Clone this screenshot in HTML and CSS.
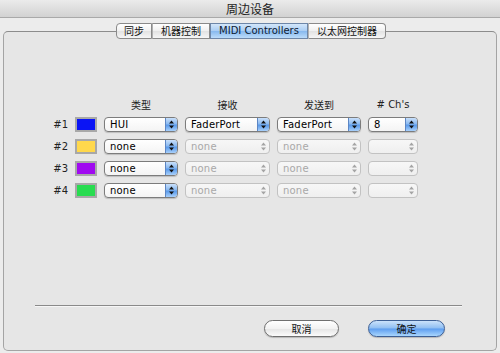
FILE: index.html
```html
<!DOCTYPE html>
<html lang="zh">

<head>
    <meta charset="UTF-8">
    <title>周边设备</title>
    <link rel="stylesheet" href="styles.css">
</head>

<body>
    <div class="window">
        <div class="titlebar">周边设备</div>
        <div class="tabview">
            <div class="tabs">
                <span class="tab">同步</span>
                <span class="tab">机器控制</span>
                <span class="tab active">MIDI Controllers</span>
                <span class="tab">以太网控制器</span>
            </div>
            <div class="panel">
                <div class="grid">
                    <span></span>
                    <span></span>
                    <span class="col-head">类型</span>
                    <span class="col-head">接收</span>
                    <span class="col-head">发送到</span>
                    <span class="col-head">#&nbsp;Ch's</span>

                    <span class="row-label">#1</span>
                    <span class="swatch"><i style="background: #0a14f5"></i></span>
                    <div class="popup"><span>HUI</span><b class="arrows"></b></div>
                    <div class="popup"><span>FaderPort</span><b class="arrows"></b></div>
                    <div class="popup"><span>FaderPort</span><b class="arrows"></b></div>
                    <div class="popup"><span>8</span><b class="arrows"></b></div>

                    <span class="row-label">#2</span>
                    <span class="swatch"><i style="background: #ffd84c"></i></span>
                    <div class="popup"><span>none</span><b class="arrows"></b></div>
                    <div class="popup disabled"><span>none</span><b class="arrows"></b></div>
                    <div class="popup disabled"><span>none</span><b class="arrows"></b></div>
                    <div class="popup disabled"><span></span><b class="arrows"></b></div>

                    <span class="row-label">#3</span>
                    <span class="swatch"><i style="background: #a00af0"></i></span>
                    <div class="popup"><span>none</span><b class="arrows"></b></div>
                    <div class="popup disabled"><span>none</span><b class="arrows"></b></div>
                    <div class="popup disabled"><span>none</span><b class="arrows"></b></div>
                    <div class="popup disabled"><span></span><b class="arrows"></b></div>

                    <span class="row-label">#4</span>
                    <span class="swatch"><i style="background: #28dc50"></i></span>
                    <div class="popup"><span>none</span><b class="arrows"></b></div>
                    <div class="popup disabled"><span>none</span><b class="arrows"></b></div>
                    <div class="popup disabled"><span>none</span><b class="arrows"></b></div>
                    <div class="popup disabled"><span></span><b class="arrows"></b></div>
                </div>

                <div class="footer">
                    <div class="separator"></div>
                    <div class="buttons">
                        <button class="btn">取消</button>
                        <button class="btn default">确定</button>
                    </div>
                </div>
            </div>
        </div>
    </div>
</body>

</html>
```

FILE: styles.css
```css
body,
html {
    margin: 0;
    padding: 0;
    width: 500px;
    height: 353px;
    overflow: hidden;
    font-family: "DejaVu Sans", "Noto Sans CJK SC", sans-serif;
    background-color: #ececec;
}

.window {
    display: flex;
    flex-direction: column;
    height: 353px;
}

.titlebar {
    height: 18px;
    line-height: 18px;
    text-align: center;
    font-size: 12px;
    color: #222;
    font-family: "Noto Sans CJK SC", sans-serif;
    background: linear-gradient(#ebebeb, #d2d2d2);
    border-bottom: 1px solid #a9a9a9;
    box-sizing: border-box;
}

.tabview {
    flex-grow: 1;
    display: flex;
    flex-direction: column;
    padding: 5px 3px 2px;
}

.tabs {
    display: flex;
    justify-content: center;
    position: relative;
    z-index: 1;
    margin-left: 2px;
}

.tab {
    height: 14px;
    line-height: 14px;
    padding: 0 8px;
    white-space: nowrap;
    font-size: 10px;
    color: #111;
    font-family: "Noto Sans CJK SC", sans-serif;
    background: linear-gradient(#ffffff, #f0f0f0 50%, #e2e2e2 51%, #f6f6f6);
    border: 1px solid #8a8a8a;
    border-left: 1px solid #b0b0b0;
}

.tab:first-child {
    border-left: 1px solid #8a8a8a;
    border-radius: 4px 0 0 4px;
    padding: 0 7px;
}

.tab:last-child {
    border-radius: 0 4px 4px 0;
}

.tab.active {
    font-family: "DejaVu Sans", sans-serif;
    font-size: 10px;
    padding: 0 8px;
    background: linear-gradient(#d3e6fa, #a9cdf3 50%, #86b8ee 51%, #bcdcfa);
    border-color: #6d86a8;
    color: #0d1a33;
}

.panel {
    flex-grow: 1;
    margin-top: -8px;
    border: 1px solid #a4a4a4;
    border-top-color: #8c8c8c;
    border-radius: 5px;
    background-color: #e6e6e6;
    display: flex;
    flex-direction: column;
    padding-top: 66px;
    padding-left: 46px;
}

.grid {
    display: grid;
    grid-template-columns: 18px 22px 74px 85px 84px 50px;
    grid-template-rows: 12px repeat(4, 15px);
    column-gap: 7px;
    row-gap: 7px;
    align-items: center;
}

.col-head {
    text-align: center;
    font-size: 10px;
    color: #222;
    font-family: "DejaVu Sans", "Noto Sans CJK SC", sans-serif;
}

.row-label {
    text-align: right;
    font-size: 10px;
    color: #222;
}

.swatch {
    display: block;
    height: 15px;
    box-sizing: border-box;
    border: 2px solid #a8a8a8;
    background: #a8a8a8;
}

.swatch i {
    display: block;
    height: 11px;
}

.popup {
    display: flex;
    height: 15px;
    box-sizing: border-box;
    border: 1px solid #7c7c7c;
    border-radius: 4px;
    background: linear-gradient(#ffffff, #f4f4f4);
    box-shadow: 0 1px 1px rgba(0, 0, 0, 0.18);
    overflow: hidden;
}

.popup span {
    flex-grow: 1;
    font-size: 10px;
    line-height: 13px;
    padding-left: 5px;
    color: #000;
    letter-spacing: 0.2px;
}

.arrows {
    width: 11px;
    border-left: 1px solid #5c86c4;
    background:
        url("data:image/svg+xml,%3Csvg xmlns='http://www.w3.org/2000/svg' width='5' height='9' viewBox='0 0 5 9'%3E%3Cpath d='M2.5 0.5L5 3.5H0z M2.5 8.5L5 5.5H0z' fill='%23111'/%3E%3C/svg%3E") center / 5px 9px no-repeat,
        linear-gradient(#c9e0fb, #8ab9f0 45%, #5a9aea 55%, #a8d0fb);
}

.popup.disabled {
    border-color: #c2c2c2;
    background: linear-gradient(#f7f7f7, #efefef);
    box-shadow: none;
}

.popup.disabled span {
    color: #a8a8a8;
}

.popup.disabled .arrows {
    border-left: none;
    background:
        url("data:image/svg+xml,%3Csvg xmlns='http://www.w3.org/2000/svg' width='5' height='9' viewBox='0 0 5 9'%3E%3Cpath d='M2.5 0.5L5 3.5H0z M2.5 8.5L5 5.5H0z' fill='%23a4a4a4'/%3E%3C/svg%3E") center / 5px 9px no-repeat;
}

.footer {
    margin-top: auto;
    margin-left: -46px;
    padding-bottom: 13px;
}

.separator {
    margin: 0 34px 0 31px;
    height: 1px;
    border-top: 1px solid #8a8a8a;
    background: #f6f6f6;
}

.buttons {
    display: flex;
    justify-content: flex-end;
    gap: 29px;
    margin-top: 13px;
    padding-right: 51px;
}

.btn {
    width: 75px;
    height: 17px;
    padding: 0;
    font-size: 10px;
    font-family: "Noto Sans CJK SC", sans-serif;
    color: #111;
    border: 1px solid #6f6f6f;
    border-radius: 9px;
    background: linear-gradient(#ffffff, #f2f2f2 50%, #e4e4e4 51%, #fbfbfb);
    box-shadow: 0 1px 1px rgba(0, 0, 0, 0.2);
}

.btn.default {
    width: 77px;
    border-color: #3d5f95;
    background: linear-gradient(#cbe2fb, #8fbef2 48%, #5d9df0 52%, #a9d6fd);
}
```
